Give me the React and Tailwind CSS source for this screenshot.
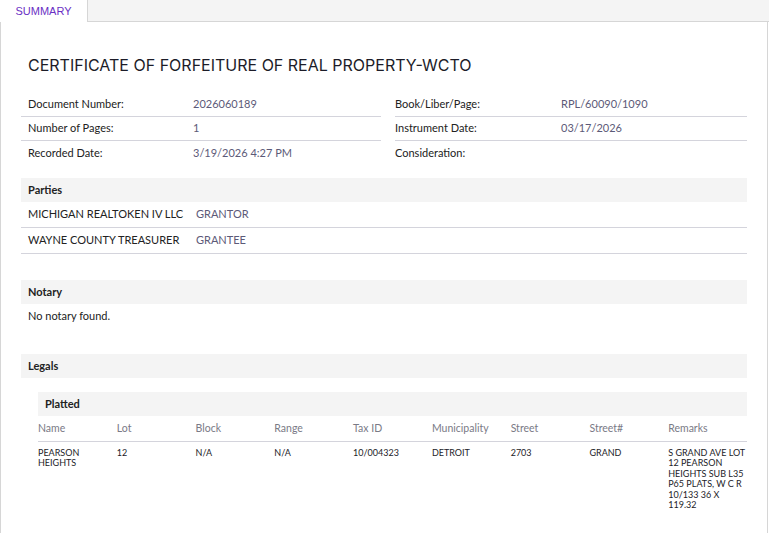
import React from "react";

const F = { fontFamily: "Lato, 'Noto Sans', sans-serif" };

function FieldRow({ label, value, last }) {
  return (
    <div className={`flex h-6 items-center ${last ? "" : "border-b border-[#d4d4dc]"}`}>
      <div className="w-[172px] pl-[7px] text-[11px] text-[#222]">{label}</div>
      <div className="text-[11px] text-[#5c5a78]">{value}</div>
    </div>
  );
}

function SectionHeader({ children, className = "" }) {
  return (
    <div className={`flex h-6 items-center bg-[#f4f4f4] pl-[7px] text-[11px] font-bold text-[#222] ${className}`}>
      {children}
    </div>
  );
}

const cols = ["Name", "Lot", "Block", "Range", "Tax ID", "Municipality", "Street", "Street#", "Remarks"];
const row = [
  "PEARSON HEIGHTS",
  "12",
  "N/A",
  "N/A",
  "10/004323",
  "DETROIT",
  "2703",
  "GRAND",
  "S GRAND AVE LOT 12 PEARSON HEIGHTS SUB L35 P65 PLATS, W C R 10/133 36 X 119.32",
];

export default function App() {
  return (
    <div className="h-[533px] w-[769px] overflow-hidden bg-white" style={F}>
      <div className="flex h-[22px] bg-[#f4f4f4]">
        <div className="flex w-[88px] items-center justify-center border-r border-[#d6d6d6] bg-white pt-[1px] text-[11px] text-[#6a2fc4]" style={{ fontFamily: "'Liberation Sans', Arial, sans-serif" }}>
          SUMMARY
        </div>
        <div className="flex-1 border-b border-[#d6d6d6]"></div>
      </div>
      <div className="h-[511px] w-[768px] border-l border-r border-[#d6d6d6] pl-[20px] pr-[20px]">
        <h1 className="pt-[32px] pl-[7px] text-[16px] leading-[22px] text-[#1c1c28]" style={{ fontFamily: "Inter, 'Liberation Sans', sans-serif" }}>
          CERTIFICATE OF FORFEITURE OF REAL PROPERTY-WCTO
        </h1>
        <div className="mt-[17px] flex">
          <div className="w-[360px]">
            <FieldRow label="Document Number:" value="2026060189" />
            <FieldRow label="Number of Pages:" value="1" />
            <FieldRow label="Recorded Date:" value="3/19/2026 4:27 PM" last />
          </div>
          <div className="ml-[14px] flex-1">
            <div className="flex h-6 items-center border-b border-[#d4d4dc]">
              <div className="w-[166px] text-[11px] text-[#222]">Book/Liber/Page:</div>
              <div className="text-[11px] text-[#5c5a78]">RPL/60090/1090</div>
            </div>
            <div className="flex h-6 items-center border-b border-[#d4d4dc]">
              <div className="w-[166px] text-[11px] text-[#222]">Instrument Date:</div>
              <div className="text-[11px] text-[#5c5a78]">03/17/2026</div>
            </div>
            <div className="flex h-6 items-center">
              <div className="w-[166px] text-[11px] text-[#222]">Consideration:</div>
              <div className="text-[11px] text-[#5c5a78]"></div>
            </div>
          </div>
        </div>

        <SectionHeader className="mt-[13px]">Parties</SectionHeader>
        <div className="flex h-[26px] items-center border-b border-[#d4d4dc]">
          <div className="w-[175px] pl-[7px] text-[11px] text-[#222]">MICHIGAN REALTOKEN IV LLC</div>
          <div className="text-[11px] text-[#5c5a78]">GRANTOR</div>
        </div>
        <div className="flex h-[26px] items-center border-b border-[#d4d4dc]">
          <div className="w-[175px] pl-[7px] text-[11px] text-[#222]">WAYNE COUNTY TREASURER</div>
          <div className="text-[11px] text-[#5c5a78]">GRANTEE</div>
        </div>

        <SectionHeader className="mt-[26px]">Notary</SectionHeader>
        <div className="flex h-6 items-center pl-[7px] text-[11px] text-[#222]">No notary found.</div>

        <SectionHeader className="mt-[26px]">Legals</SectionHeader>
        <div className="pl-[17px] pt-[14px]">
          <SectionHeader>Platted</SectionHeader>
          <div className="grid grid-cols-9 border-b border-[#d4d4dc] pt-[5px] pb-[4px] text-[10.5px] text-[#7a7a86]">
            {cols.map((c) => (
              <div key={c}>{c}</div>
            ))}
          </div>
          <div className="grid grid-cols-9 pt-[6px] text-[9px] leading-[10.5px] text-[#1c1c28]">
            {row.map((c, i) => (
              <div key={i}>{c}</div>
            ))}
          </div>
        </div>
      </div>
    </div>
  );
}
